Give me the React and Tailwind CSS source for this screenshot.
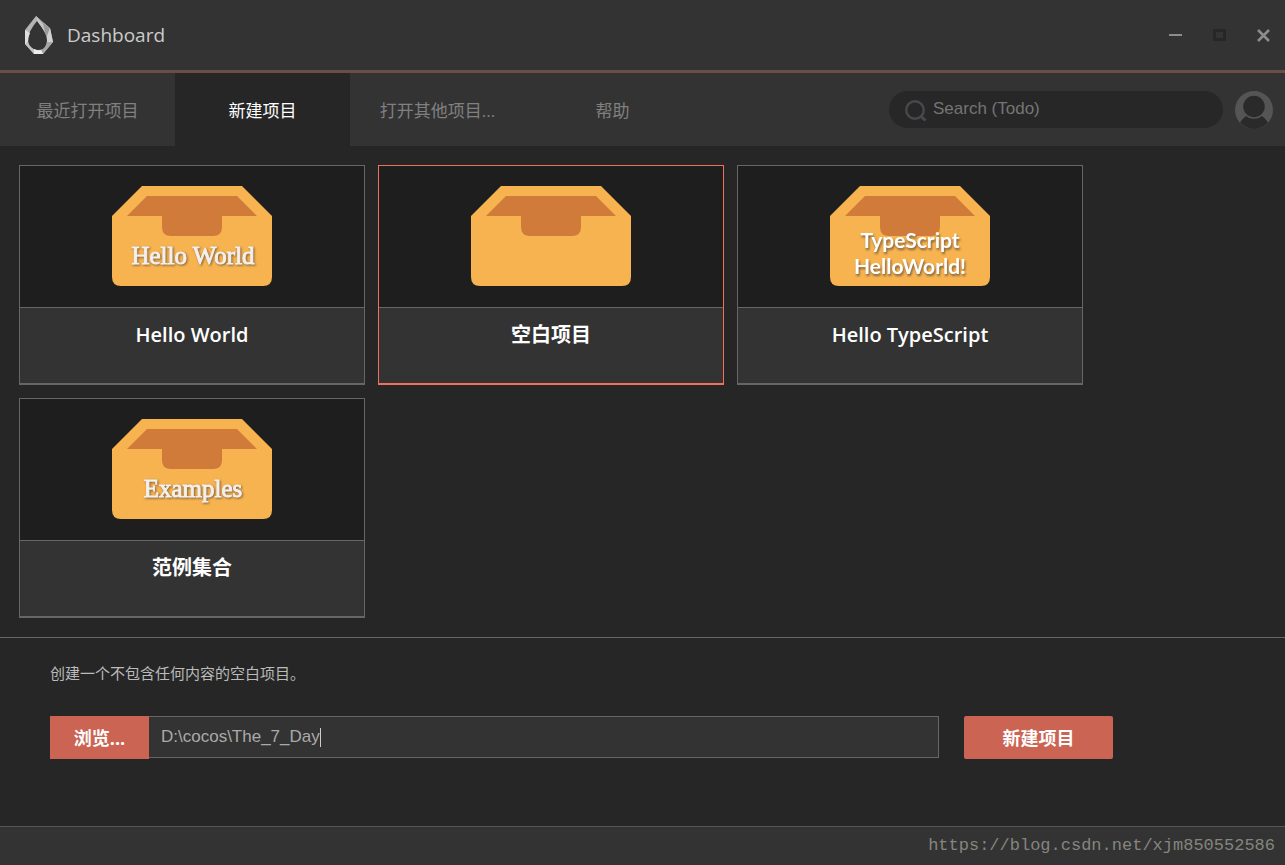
import React, { useState } from "react";
import clsx from "clsx";

const TABS = [
  { id: "recent", label: "最近打开项目" },
  { id: "new", label: "新建项目" },
  { id: "open", label: "打开其他项目..." },
  { id: "help", label: "帮助" },
];

const TEMPLATES = [
  { id: "hello", name: "Hello World", lines: ["Hello World"] },
  { id: "empty", name: "空白项目", lines: [] },
  { id: "ts", name: "Hello TypeScript", lines: ["TypeScript", "HelloWorld!"] },
  { id: "examples", name: "范例集合", lines: ["Examples"] },
];

const Logo = () => (
  <svg width="30" height="40" viewBox="0 0 30 40" aria-hidden="true">
    <path
      d="M12 1L1 15V29L10 39H19L29 27L26 13Z M13 6Q4 17 4 24Q4 35 14 35Q23 35 23 25Q23 18 13 6Z"
      fill="#b4b4b4"
      fillRule="evenodd"
    />
    <path d="M12 1L26 14L27 21L22 20Z" fill="#9a9a9a" />
    <path d="M12 1L14 7L21 17L19 9Z" fill="#c8c8c8" />
    <path d="M1 15V29L4 27Q4 22 6 18Z" fill="#dedede" />
    <path d="M26 13L29 27L23 29V21Z" fill="#d0d0d0" />
    <path d="M29 27L19 39L17 35Q22 33 23 27Z" fill="#a6a6a6" />
    <path d="M1 29L10 39L12 35Q6 33 4 27Z" fill="#c2c2c2" />
    <path d="M10 39H19L17 35Q14 36 10 34Z" fill="#ededed" />
  </svg>
);

const WindowControls = () => (
  <div className="flex items-center gap-5">
    <button type="button" aria-label="Minimize" className="flex h-6 w-6 items-center justify-center">
      <svg width="13" height="13" viewBox="0 0 13 13">
        <path d="M0 6h13" stroke="#8c8c8c" strokeWidth="2" />
      </svg>
    </button>
    <button type="button" aria-label="Maximize" disabled className="flex h-6 w-6 items-center justify-center">
      <svg width="13" height="13" viewBox="0 0 13 13">
        <path d="M1.500 1.500h10v9h-10z" fill="none" stroke="#272727" strokeWidth="3" />
      </svg>
    </button>
    <button type="button" aria-label="Close" className="flex h-6 w-6 items-center justify-center">
      <svg width="13" height="13" viewBox="0 0 13 13">
        <path d="M1 1l11 11M12 1L1 12" stroke="#8c8c8c" strokeWidth="2.600" />
      </svg>
    </button>
  </div>
);

const BoxIcon = ({ lines }) => (
  <svg width="160" height="100" viewBox="0 0 160 100" aria-hidden="true">
    <path d="M30 0H130L160 30V91Q160 100 151 100H9Q0 100 0 91V30Z" fill="#f6b350" />
    <path d="M35 10H125L145 30H110V41Q110 50 101 50H59Q50 50 50 41V30H15Z" fill="#d07b39" />
    {lines.length === 1 && (
      <text
        x="81"
        y="78"
        textAnchor="middle"
        className="fill-[#f5f0ee] stroke-[#f5f0ee] font-['Liberation_Serif',serif] text-[25px] [stroke-width:0.9] drop-shadow-[1px_1px_1px_#80603a]"
      >
        {lines[0]}
      </text>
    )}
    {lines.length === 2 && (
      <g className="fill-white font-['Lato',sans-serif] text-[21px] font-bold drop-shadow-[1px_2px_1px_#80603a]">
        <text x="80" y="62" textAnchor="middle">{lines[0]}</text>
        <text x="80" y="88" textAnchor="middle">{lines[1]}</text>
      </g>
    )}
  </svg>
);

const TemplateCard = ({ template, selected, onSelect }) => (
  <button
    type="button"
    aria-pressed={selected}
    onClick={onSelect}
    className={clsx(
      "flex w-[346px] flex-col border border-b-2",
      selected ? "border-[#f0705e]" : "border-[#666666]"
    )}
  >
    <span className="flex w-full justify-center bg-[#1e1e1e] pt-5 pb-[21px]">
      <BoxIcon lines={template.lines} />
    </span>
    <span className="h-[76px] w-full border-t border-[#666666] bg-[#333333] pt-3 text-center text-[20px] leading-[30px] font-semibold text-white">
      {template.name}
    </span>
  </button>
);

const App = () => {
  const [tab, setTab] = useState("new");
  const [selected, setSelected] = useState("empty");
  const [path, setPath] = useState("D:\\cocos\\The_7_Day");

  return (
    <div className="flex min-h-screen flex-col bg-[#262626] font-['Open_Sans','Noto_Sans_CJK_SC',sans-serif]">
      <header className="flex h-[73px] items-center justify-between border-b-3 border-[#6b4d45] bg-[#333333] pr-2.5 pl-6">
        <div className="flex items-center gap-[13px]">
          <Logo />
          <h1 className="text-[19px] text-[#cccccc]">Dashboard</h1>
        </div>
        <WindowControls />
      </header>

      <nav className="flex h-[73px] items-center justify-between bg-[#333333] pr-3">
        <div className="flex h-full">
          {TABS.map((t) => (
            <button
              key={t.id}
              type="button"
              onClick={() => setTab(t.id)}
              className={clsx(
                "w-[175px] pt-0.5 text-[17px]",
                tab === t.id ? "bg-[#262626] text-white" : "text-[#808080]"
              )}
            >
              {t.label}
            </button>
          ))}
        </div>
        <div className="flex items-center gap-3">
          <label className="flex h-[37px] w-[334px] items-center gap-1.5 rounded-full bg-[#272727] pr-5 pl-4">
            <svg width="22" height="22" viewBox="0 0 22 22" fill="none" stroke="#48484d" aria-hidden="true">
              <circle cx="10" cy="11" r="8.800" strokeWidth="2.400" />
              <path d="M15.500 17l5 4.500" strokeWidth="3" />
            </svg>
            <input
              type="text"
              aria-label="Search"
              placeholder="Search (Todo)"
              className="min-w-0 flex-1 bg-transparent pb-0.5 font-['Liberation_Sans',sans-serif] text-[17px] text-[#aaaaaa] outline-none placeholder:text-[#757575]"
            />
          </label>
          <button type="button" aria-label="Account">
            <svg width="38" height="38" viewBox="0 0 38 38">
              <circle cx="19" cy="19" r="19" fill="#555555" />
              <path d="M5 31.500C8 27.500 10 25 13 24.500Q19 28 25 24.500C28 25 30 27.500 33 31.500Q27 38 19 38T5 31.500Z" fill="#2a2a2a" />
              <circle cx="19" cy="15.500" r="11.500" fill="#2a2a2a" stroke="#555555" strokeWidth="1.500" />
            </svg>
          </button>
        </div>
      </nav>

      <main className="flex flex-1 flex-col">
        <section className="flex flex-wrap gap-[13px] px-[19px] pt-[19px] pb-[19px]">
          {TEMPLATES.map((t) => (
            <TemplateCard
              key={t.id}
              template={t}
              selected={selected === t.id}
              onSelect={() => setSelected(t.id)}
            />
          ))}
        </section>

        <section className="flex-1 border-t border-[#666666] px-[50px] pt-[23px]">
          <p className="text-[15px] leading-6 text-[#bbbbbb]">创建一个不包含任何内容的空白项目。</p>
          <div className="mt-[31px] flex gap-[25px] pr-[122px]">
            <div className="flex flex-1 items-start">
              <button type="button" className="h-[43px] w-[99px] bg-[#cb6453] pt-0.5 text-[18px] font-bold text-white">
                浏览...
              </button>
              <label className="flex h-[42px] flex-1 items-center border border-l-0 border-[#666666] bg-[#333333] px-3">
                <input
                  type="text"
                  aria-label="项目路径"
                  value={path}
                  onChange={(e) => setPath(e.target.value)}
                  className="field-sizing-content bg-transparent font-['Liberation_Sans',sans-serif] text-[17px] text-[#aaaaaa] caret-transparent outline-none"
                />
                <span className="h-[19px] w-px bg-[#cccccc]" />
              </label>
            </div>
            <button type="button" className="h-[43px] w-[149px] rounded-xs bg-[#cb6453] pt-0.5 text-[18px] font-bold text-white">
              新建项目
            </button>
          </div>
        </section>
      </main>

      <footer className="flex h-[39px] items-center justify-end border-t border-[#555555] bg-[#333333] pr-2.5">
        <a href="https://blog.csdn.net/xjm850552586" className="font-['Liberation_Mono',monospace] text-[17px] text-[#85857f]">
          https://blog.csdn.net/xjm850552586
        </a>
      </footer>
    </div>
  );
};

export default App;
